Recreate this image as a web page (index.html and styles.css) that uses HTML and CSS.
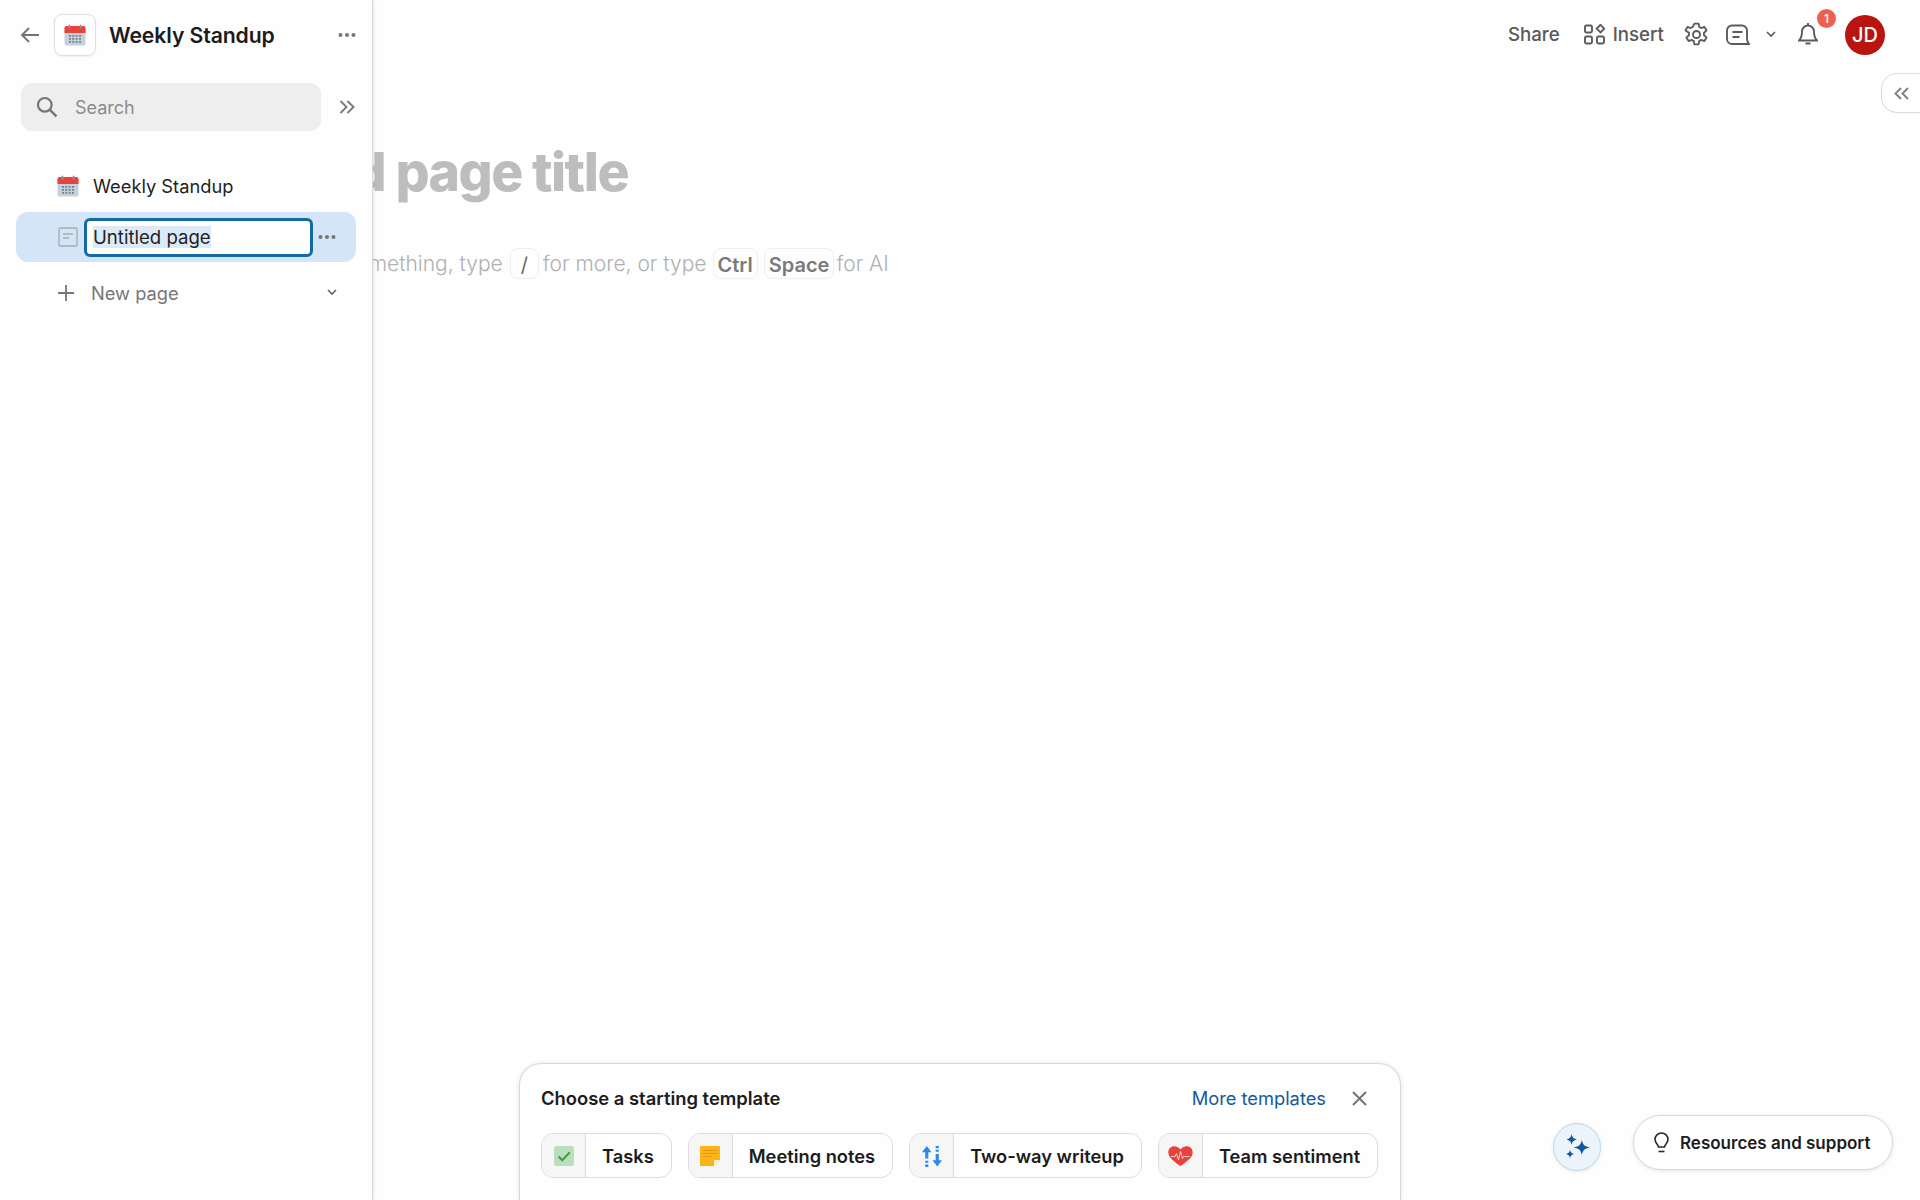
FILE: index.html
```html
<!DOCTYPE html>
<html>
<head>
<meta charset="utf-8">
<title>Weekly Standup</title>
<link rel="stylesheet" href="styles.css">
</head>
<body>

<svg class="defs" width="0" height="0">
    <symbol id="calendar" viewBox="0 0 22 22">
        <rect x="0.5" y="2" width="21" height="19.5" rx="2" fill="#c5d1da"/>
        <path d="M0.5 9V4a2 2 0 0 1 2-2h17a2 2 0 0 1 2 2v5z" fill="#e9423a"/>
        <rect x="4.6" y="0.5" width="1.6" height="4" rx="0.8" fill="#8d99a3"/>
        <rect x="15.8" y="0.5" width="1.6" height="4" rx="0.8" fill="#8d99a3"/>
        <g fill="#76858f">
            <rect x="5" y="11" width="2" height="1.8"/><rect x="8.2" y="11" width="2" height="1.8"/><rect x="11.6" y="11" width="2" height="1.8"/><rect x="15" y="11" width="2" height="1.8"/>
            <rect x="5" y="14" width="2" height="1.8"/><rect x="8.2" y="14" width="2" height="1.8"/><rect x="11.6" y="14" width="2" height="1.8"/><rect x="15" y="14" width="2" height="1.8"/>
            <rect x="5" y="17" width="2" height="1.8"/><rect x="8.2" y="17" width="2" height="1.8"/><rect x="11.6" y="17" width="2" height="1.8"/><rect x="15" y="17" width="2" height="1.8"/>
        </g>
    </symbol>
    <symbol id="dots" viewBox="0 0 18 4">
        <circle cx="2.5" cy="2" r="2"/><circle cx="9" cy="2" r="2"/><circle cx="15.5" cy="2" r="2"/>
    </symbol>
</svg>

<aside class="sidebar">
    <div class="side-head">
        <svg class="ico-back" width="20" height="18" viewBox="0 0 20 18"><path d="M19 9H2M9 2 2 9l7 7" fill="none" stroke="#737373" stroke-width="1.8"/></svg>
        <div class="app-box"><svg width="22" height="22"><use href="#calendar"/></svg></div>
        <div class="app-title">Weekly Standup</div>
        <svg class="ico-dots" width="18" height="4"><use href="#dots"/></svg>
    </div>

    <div class="search-row">
        <div class="search">
            <svg width="22" height="22" viewBox="0 0 20 20"><circle cx="8" cy="8" r="6.2" fill="none" stroke="#767676" stroke-width="2"/><path d="m12.6 12.6 6 6" stroke="#767676" stroke-width="2.2"/></svg>
            <span>Search</span>
        </div>
        <svg class="ico-expand" width="16" height="14" viewBox="0 0 16 14"><path d="m1.5 1 6 6-6 6M8.5 1l6 6-6 6" fill="none" stroke="#7a7a7a" stroke-width="1.9"/></svg>
    </div>

    <ul class="tree">
        <li class="tree-row">
            <svg width="22" height="22"><use href="#calendar"/></svg>
            <span>Weekly Standup</span>
        </li>
        <li class="tree-row selected">
            <svg width="20" height="20" viewBox="0 0 20 20"><rect x="1" y="1" width="18" height="18" rx="1.5" fill="none" stroke="#b2b9bf" stroke-width="1.8"/><path d="M5 7h10M5 11h6" stroke="#b2b9bf" stroke-width="1.8"/></svg>
            <div class="rename"><span class="picked">Untitled page</span></div>
            <svg class="ico-dots" width="18" height="4"><use href="#dots"/></svg>
        </li>
        <li class="tree-row new-page">
            <svg width="16" height="16" viewBox="0 0 16 16"><path d="M8 0v16M0 8h16" stroke="#767676" stroke-width="1.8"/></svg>
            <span>New page</span>
            <svg class="ico-caret" width="10" height="7" viewBox="0 0 10 7"><path d="m1 1 4 4 4-4" fill="none" stroke="#666" stroke-width="1.6"/></svg>
        </li>
    </ul>
</aside>

<main class="main">
    <header class="topbar">
        <span class="top-link share">Share</span>
        <span class="top-link insert">
            <svg width="21" height="21" viewBox="0 0 21 21" fill="none" stroke="#5b5b5b" stroke-width="1.9"><rect x="1" y="1.5" width="7" height="7" rx="1.5"/><rect x="1" y="12.5" width="7" height="7" rx="1.5"/><rect x="13" y="12.5" width="7" height="7" rx="1.5"/><path d="m16.5 0.8 3.800 3.800-3.800 3.800-3.800-3.800z"/></svg>
            Insert
        </span>
        <svg class="ico-gear" width="25" height="25" viewBox="0 0 24 24" fill="none" stroke="#5b5b5b" stroke-width="1.800" stroke-linejoin="round"><circle cx="12" cy="12" r="3.400"/><path d="M10 1.500h4l.6 3.200 2 1.100 3-1.100 2 3.500-2.400 2.100v2.400l2.400 2.100-2 3.500-3-1.100-2 1.100-.6 3.200h-4l-.6-3.200-2-1.100-3 1.100-2-3.500 2.400-2.100v-2.400L1.400 8.200l2-3.500 3 1.100 2-1.100z"/></svg>
        <svg class="ico-chat" width="24" height="22" viewBox="0 0 24 22" fill="none" stroke="#5b5b5b" stroke-width="1.9"><path d="M6 1.500h10a5 5 0 0 1 5 5v8c0 2 .8 4 2 5.500H6a5 5 0 0 1-5-5v-8.500a5 5 0 0 1 5-5z"/><path d="M6.500 8h10M6.500 13h7"/></svg>
        <svg class="ico-caret" width="10" height="7" viewBox="0 0 10 7"><path d="m1 1 4 4 4-4" fill="none" stroke="#5b5b5b" stroke-width="1.6"/></svg>
        <div class="bell">
            <svg width="20" height="23" viewBox="0 0 20 23" fill="none" stroke="#5b5b5b" stroke-width="1.9"><path d="M10 2.500a6 6 0 0 1 6 6c0 5 1 7 3 9H1c2-2 3-4 3-9a6 6 0 0 1 6-6zM10 0v2.500M7.500 20.500h5"/></svg>
            <span class="badge">1</span>
        </div>
        <div class="avatar">JD</div>
    </header>

    <button class="collapse-tab"><svg width="15" height="13" viewBox="0 0 15 13"><path d="M7 1 1.500 6.500 7 12M14 1 8.500 6.500 14 12" fill="none" stroke="#808080" stroke-width="1.9"/></svg></button>

    <section class="page">
        <div class="page-inner">
            <h1 class="page-title">Add page title</h1>
            <p class="hint">Write something, type <kbd class="slash">/</kbd> for more, or type <kbd class="ctrl">Ctrl</kbd> <kbd class="space">Space</kbd> for AI</p>
        </div>
    </section>

    <section class="templates">
        <div class="tpl-head">
            <span class="tpl-title">Choose a starting template</span>
            <a class="tpl-more">More templates</a>
            <svg width="15" height="15" viewBox="0 0 15 15"><path d="m1 1 13 13M14 1 1 14" stroke="#707070" stroke-width="1.8"/></svg>
        </div>
        <div class="tpl-list">
            <div class="tpl-btn">
                <div class="tpl-ico"><svg width="20" height="20" viewBox="0 0 20 20"><rect width="20" height="20" rx="2.500" fill="#b9dfbd"/><path d="m4.500 10.500 3.800 3.800 7.500-8" fill="none" stroke="#3f9e4a" stroke-width="2"/></svg></div>
                <span>Tasks</span>
            </div>
            <div class="tpl-btn">
                <div class="tpl-ico"><svg width="20" height="20" viewBox="0 0 20 20"><path d="M0 0h20v14l-6 6H0z" fill="#fdb515"/><path d="M20 14h-6v6z" fill="#fff0c4"/><path d="M2.500 4.500h15M2.500 7.500h15M2.500 10.500h9" stroke="#e8961a" stroke-width="1"/></svg></div>
                <span>Meeting notes</span>
            </div>
            <div class="tpl-btn">
                <div class="tpl-ico"><svg width="22" height="22" viewBox="0 0 20 21"><path d="M5 1 .5 7h3v6h3V7h3z" fill="#2b8ae6"/><path d="M3.500 15h3v2h-3zM3.500 18.500h3V21h-3z" fill="#2b8ae6"/><path d="M15 20.500l4.500-6h-3v-6h-3v6h-3z" fill="#2b8ae6"/><path d="M13.500 1h3v2h-3zM13.500 4.500h3v2h-3z" fill="#2b8ae6"/></svg></div>
                <span>Two-way writeup</span>
            </div>
            <div class="tpl-btn">
                <div class="tpl-ico"><svg width="25" height="20" viewBox="0 0 25 20"><path d="M12.500 20C6 15.500.3 11.500.3 6.200.3 2.800 3 .2 6.300.2c2.600 0 4.900 1.300 6.200 3.400C13.800 1.500 16.100.2 18.700.2c3.300 0 6 2.600 6 6 0 5.300-5.700 9.300-12.200 13.800z" fill="#e9423a"/><path d="M3 10.500h4l1.500-3 2 6.500 2-8.500 2 7 1-2h6" fill="none" stroke="#fbd5d2" stroke-width="1"/></svg></div>
                <span>Team sentiment</span>
            </div>
        </div>
    </section>

    <button class="ai-btn"><svg width="28" height="28" viewBox="0 0 26 26" fill="#14569b"><path d="M8 1c.7 3.200 1.800 4.300 5 5-3.200.7-4.300 1.800-5 5-.7-3.200-1.800-4.300-5-5 3.200-.7 4.300-1.800 5-5z"/><path d="M17.500 6.500c1 4.500 2.500 6 7.500 7-5 1-6.500 2.500-7.500 7-1-4.500-2.500-6-7.500-7 5-1 6.500-2.500 7.500-7z"/><path d="M6.500 15.500c.5 2.600 1.400 3.500 4 4-2.600.5-3.500 1.400-4 4-.5-2.600-1.400-3.500-4-4 2.600-.5 3.500-1.400 4-4z"/></svg></button>

    <button class="help-btn">
        <svg width="15" height="21" viewBox="0 0 15 21" fill="none" stroke="#2a2a2a" stroke-width="1.600"><path d="M4.500 15c0-2.500-3.500-4-3.500-7.500a6.500 6.500 0 0 1 13 0C14 11 10.500 12.500 10.500 15z"/><path d="M4.500 19.500h6"/></svg>
        Resources and support
    </button>
</main>

</body>
</html>
```

FILE: styles.css
```css
* { box-sizing: border-box; }
html, body { height: 100%; }
body { margin: 0; display: flex; height: 1200px; overflow: hidden; background-color: #fefefe; color: #1c1c1c; font-family: "Inter", "Liberation Sans", sans-serif; }
.defs { position: absolute; }
ul { list-style: none; margin: 0; padding: 0; }
button { font-family: inherit; background: none; border: none; padding: 0; }

/* left panel */
.sidebar { width: 373px; flex: none; position: relative; z-index: 2; background-color: #fefefe; border-right: 1px solid #d9d9d9; box-shadow: 1px 0 3px rgba(0,0,0,0.10); }
.side-head { display: flex; align-items: center; height: 41px; margin-top: 14px; padding-left: 20px; }
.ico-back { flex: none; }
.app-box { width: 42px; height: 42px; margin-left: 14px; flex: none; display: flex; align-items: center; justify-content: center; border: 1px solid #dedede; border-radius: 8px; background-color: #fff; box-shadow: 0 1px 2px rgba(0,0,0,0.06); }
.app-title { margin-left: 13px; font-size: 21.2px; font-weight: 600; letter-spacing: -0.1px; flex: 1; }
.ico-dots { fill: #767676; flex: none; }
.side-head .ico-dots { margin-right: 16px; }

.search-row { display: flex; align-items: center; margin: 28px 0 0 21px; }
.search { width: 300px; height: 48px; display: flex; align-items: center; padding-left: 15px; background-color: #eeeeee; border-radius: 11px; font-size: 18px; color: #8c8c8c; }
.search span { margin-left: 17px; }
.ico-expand { margin-left: 18px; }

.tree { margin-top: 29px; }
.tree-row { display: flex; align-items: center; height: 50px; margin: 0 16px; font-size: 18.3px; color: #1f1f1f; }
.tree-row:first-child { padding-left: 41px; height: 52px; }
.tree-row:first-child span { margin-left: 14px; }
.tree-row.selected { padding-left: 42px; background-color: #d3e5f6; border-radius: 12px; }
.rename { width: 229px; height: 39px; margin-left: 6px; padding-left: 8px; display: flex; align-items: center; background-color: #fff; border: 3px solid #136ba6; border-radius: 6px; flex: none; }
.picked { background-color: #dceaf7; font-size: 18.6px; line-height: 22px; margin-left: -2px; }
.selected .ico-dots { margin-left: 5px; }
.new-page { height: 61px !important; padding-left: 42px; color: #767676; }
.new-page span { margin-left: 17px; flex: 1; }
.new-page .ico-caret { margin-right: 19px; }

/* main area */
.main { flex: 1; position: relative; display: flex; flex-direction: column; min-width: 0; }
.topbar { display: flex; align-items: center; justify-content: flex-end; height: 69px; padding-right: 35px; flex: none; color: #595959; font-size: 18.7px; font-weight: 500; }
.top-link { display: flex; align-items: center; }
.insert { margin-left: 24px; }
.insert svg { margin-right: 8px; }
.ico-gear { margin-left: 20px; }
.ico-chat { margin-left: 17px; }
.topbar .ico-caret { margin-left: 16px; }
.bell { position: relative; margin-left: 22px; height: 23px; }
.badge { position: absolute; left: 19px; top: -14px; width: 19px; height: 19px; border-radius: 50%; background-color: #ee6151; color: #fff; font-size: 12px; line-height: 19px; text-align: center; font-weight: 500; }
.avatar { width: 40px; height: 40px; margin-left: 27px; border-radius: 50%; background-color: #b9140f; color: #fff; font-size: 20px; font-weight: 500; line-height: 40px; text-align: center; }

.collapse-tab { position: absolute; right: 0; top: 73px; width: 39px; height: 40px; display: flex; align-items: center; justify-content: center; background-color: #fff; border: 1px solid #dcdcdc; border-right: none; border-radius: 16px 0 0 16px; }

.page { flex: none; overflow: hidden; white-space: nowrap; padding-top: 70px; }
.page-inner { margin-left: -91px; }
.page-title { margin: 0; font-size: 53.5px; line-height: 66px; font-weight: 800; letter-spacing: -1.5px; color: #bdbdbd; }
.hint { margin: 43px 0 0 7px; display: flex; align-items: center; gap: 4px; font-size: 21px; line-height: 31px; color: #b0b0b0; font-weight: 300; }
kbd { font-family: inherit; font-size: 20px; font-weight: 600; color: #7a7a7a; padding: 0 4px; height: 31px; line-height: 33px; border: 1px solid #efefef; border-radius: 8px; }
.slash { width: 29px; padding: 0; text-align: center; font-weight: 400; color: #666; margin: 0 0 0 3px; }
.ctrl { margin-left: 2px; }
.space { margin-left: 2px; margin-right: -2px; }

.templates { margin: auto 0 0 146px; width: 882px; height: 137px; padding: 17px 21px 0 21px; flex: none; background-color: #fefefe; border: 1px solid #d8d8d8; border-bottom: none; border-radius: 22px 22px 0 0; box-shadow: 0 0 4px rgba(0,0,0,0.10); }
.tpl-head { display: flex; align-items: center; height: 34px; padding-right: 12px; }
.tpl-title { flex: 1; font-size: 18.4px; font-weight: 600; }
.tpl-more { color: #15599e; font-size: 18.3px; margin-right: 26px; }
.tpl-list { display: flex; gap: 16px; margin-top: 18px; }
.tpl-btn { display: flex; align-items: center; height: 45px; border: 1px solid #dcdcdc; border-radius: 12px; overflow: hidden; font-size: 18.3px; font-weight: 600; background-color: #fefefe; padding-right: 17px; }
.tpl-ico { width: 44px; height: 100%; flex: none; display: flex; align-items: center; justify-content: center; background-color: #f6f6f6; border-right: 1px solid #dcdcdc; margin-right: 16px; }

.ai-btn { position: absolute; left: 1180px; top: 1123px; width: 48px; height: 48px; display: flex; align-items: center; justify-content: center; border: 1px solid #b9d8ef; border-radius: 50%; background-color: #ebf3fb; box-shadow: 0 1px 4px rgba(0,0,0,0.08); }
.help-btn { position: absolute; right: 27px; top: 1115px; width: 260px; height: 55px; display: flex; align-items: center; padding-left: 20px; gap: 11px; border: 1px solid #d8d8d8; border-radius: 28px; background-color: #fff; box-shadow: 0 1px 4px rgba(0,0,0,0.10); font-size: 17px; font-weight: 600; color: #1c1c1c; }
```
